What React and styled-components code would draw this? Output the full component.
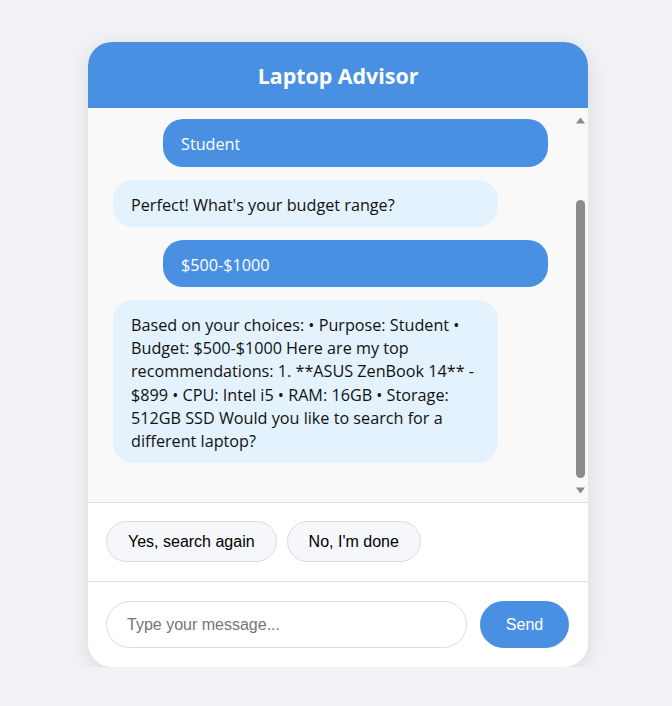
import React, { useLayoutEffect, useRef, useState } from "react";
import styled, { createGlobalStyle } from "styled-components";

const GlobalStyle = createGlobalStyle`
  * {
    box-sizing: border-box;
  }
  body {
    margin: 0;
    background: #f0f2f5;
    font-family: "Open Sans", "Noto Sans", sans-serif;
  }
`;

const Page = styled.div`
  display: flex;
  justify-content: center;
  padding: 42px 0 0 4px;
`;

const Card = styled.div`
  width: 500px;
  height: 625px;
  background: #fff;
  border-radius: 24px;
  box-shadow: 0 4px 20px rgba(0, 0, 0, 0.1);
  display: flex;
  flex-direction: column;
  overflow: hidden;
`;

const Header = styled.div`
  height: 66px;
  flex-shrink: 0;
  padding-top: 2px;
  background: #4a90e2;
  color: #fff;
  display: flex;
  align-items: center;
  justify-content: center;

  h1 {
    margin: 0;
    font-size: 21.4px;
    line-height: 1.3;
    font-weight: 700;
  }
`;

const ChatPane = styled.div`
  flex: 1;
  min-height: 0;
  display: flex;
  background: #f9f9f9;
`;

const Messages = styled.div`
  flex: 1;
  overflow-y: auto;
  scrollbar-width: none;
  padding: 34px 25px 39px;
  display: flex;
  flex-direction: column;
  gap: 13px;

  &::-webkit-scrollbar {
    display: none;
  }
`;

const ScrollBar = styled.div`
  width: 15px;
  flex-shrink: 0;
  display: flex;
  flex-direction: column;
  align-items: center;
  color: #8a8a8a;
`;

const ArrowButton = styled.div`
  height: ${(p) => p.$h}px;
  padding-top: ${(p) => p.$offset}px;
  flex-shrink: 0;
  display: flex;
  justify-content: center;

  svg {
    display: block;
  }
`;

const Track = styled.div`
  flex: 1;
  width: 100%;
  padding-bottom: 2px;
  display: flex;
`;

const TrackInner = styled.div`
  position: relative;
  flex: 1;
`;

const Thumb = styled.div`
  position: absolute;
  left: 3px;
  width: 9px;
  border-radius: 5px;
  background: #8a8a8a;
`;

const Bubble = styled.div`
  width: 385px;
  padding: 14px 18px 10px;
  border-radius: 20px;
  font-size: 16.2px;
  line-height: 23.2px;
  align-self: ${(p) => (p.$user ? "flex-end" : "flex-start")};
  background: ${(p) => (p.$user ? "#4a90e2" : "#e3f2fd")};
  color: ${(p) => (p.$user ? "#fff" : "#111")};
`;

const Options = styled.div`
  flex-shrink: 0;
  border-top: 1px solid #e0e0e0;
  padding: 18px 18px 19px;
  display: flex;
  gap: 10px;
`;

const OptionButton = styled.button`
  height: 41px;
  font-family: "Liberation Sans", Arial, sans-serif;
  font-size: 16px;
  padding: 0 21px;
  border-radius: 21px;
  border: 1px solid #dcdcdc;
  background: #f5f7fa;
  color: #000;
  cursor: pointer;
`;

const InputRow = styled.form`
  flex-shrink: 0;
  border-top: 1px solid #e0e0e0;
  padding: 19px 19px 19px 18px;
  display: flex;
  gap: 13px;
`;

const TextInput = styled.input`
  flex: 1;
  height: 47px;
  padding: 0 20px;
  border: 1px solid #dcdcdc;
  border-radius: 24px;
  font-family: "Liberation Sans", Arial, sans-serif;
  font-size: 16px;
  outline: none;

  &::placeholder {
    color: #757575;
  }
`;

const SendButton = styled.button`
  width: 89px;
  height: 47px;
  border: none;
  border-radius: 24px;
  background: #4a90e2;
  color: #fff;
  font-family: "Liberation Sans", Arial, sans-serif;
  font-size: 16px;
  cursor: pointer;
`;

const messages = [
  {
    user: false,
    text: "Hi! I'm your Laptop Advisor. What will you mainly use the laptop for?",
  },
  { user: true, text: "Student" },
  { user: false, text: "Perfect! What's your budget range?" },
  { user: true, text: "$500-$1000" },
  {
    user: false,
    text: "Based on your choices: • Purpose: Student • Budget: $500-$1000 Here are my top recommendations: 1. **ASUS ZenBook 14** - $899 • CPU: Intel i5 • RAM: 16GB • Storage: 512GB SSD Would you like to search for a different laptop?",
  },
];

const Triangle = ({ down }) => (
  <svg width="9" height="7" viewBox="0 0 9 7">
    <path
      d={down ? "M0 0.5 H9 L4.5 6.5 Z" : "M4.5 0.5 L9 6.5 H0 Z"}
      fill="currentColor"
    />
  </svg>
);

export default function App() {
  const listRef = useRef(null);
  const [value, setValue] = useState("");
  const [thumb, setThumb] = useState({ top: 0, size: 1 });

  const updateThumb = () => {
    const el = listRef.current;
    if (!el) return;
    setThumb({
      top: el.scrollTop / el.scrollHeight,
      size: el.clientHeight / el.scrollHeight,
    });
  };

  useLayoutEffect(() => {
    if (listRef.current) {
      listRef.current.scrollTop = listRef.current.scrollHeight;
    }
    updateThumb();
  }, []);

  return (
    <>
      <GlobalStyle />
      <Page>
        <Card>
          <Header>
            <h1>Laptop Advisor</h1>
          </Header>
          <ChatPane>
            <Messages ref={listRef} onScroll={updateThumb}>
              {messages.map((m, i) => (
                <Bubble key={i} $user={m.user}>
                  {m.text}
                </Bubble>
              ))}
            </Messages>
            <ScrollBar>
              <ArrowButton $h={17} $offset={9}>
                <Triangle />
              </ArrowButton>
              <Track>
                <TrackInner>
                  <Thumb
                    style={{
                      top: `${thumb.top * 100}%`,
                      height: `${thumb.size * 100}%`,
                    }}
                  />
                </TrackInner>
              </Track>
              <ArrowButton $h={22} $offset={7}>
                <Triangle down />
              </ArrowButton>
            </ScrollBar>
          </ChatPane>
          <Options>
            <OptionButton>Yes, search again</OptionButton>
            <OptionButton>No, I'm done</OptionButton>
          </Options>
          <InputRow onSubmit={(e) => e.preventDefault()}>
            <TextInput
              placeholder="Type your message..."
              value={value}
              onChange={(e) => setValue(e.target.value)}
            />
            <SendButton type="submit">Send</SendButton>
          </InputRow>
        </Card>
      </Page>
    </>
  );
}
